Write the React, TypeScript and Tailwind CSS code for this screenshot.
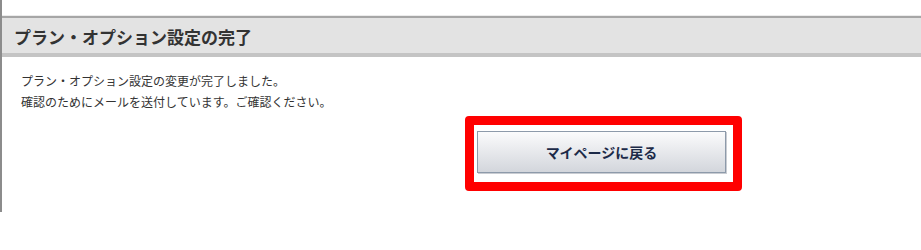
export default function App() {
  return (
    <div
      className="h-[250px] w-[921px] overflow-hidden bg-white"
      style={{ fontFamily: '"Noto Sans CJK JP", "Noto Sans", sans-serif' }}
    >
      <div className="h-[212px] border-l-2 border-[#8c8c8c] pt-[15px]">
        {/* Section header */}
        <div className="border-t border-[#ececec]">
          <div className="flex h-[41px] items-center border-t-2 border-[#a6a6a6] bg-[#e3e3e3] pl-[12px] shadow-[inset_0_-4px_0_#c4c4c4]">
            <h2 className="pb-[2px] text-[17px] font-bold leading-none text-[#333333]">
              プラン・オプション設定の完了
            </h2>
          </div>
        </div>

        {/* Message */}
        <div className="pl-[19px] pt-[13px] text-[12px] leading-[21px] text-[#333333]">
          <p>プラン・オプション設定の変更が完了しました。</p>
          <p>確認のためにメールを送付しています。ご確認ください。</p>
        </div>

        {/* Action */}
        <div className="ml-[475px] mt-[19px] flex">
          <div className="relative">
            <button className="h-[42px] w-[249px] border border-[#8d9aaa] bg-gradient-to-b from-[#fbfbfc] to-[#d3d6dc] text-[14px] font-bold text-[#1c2a48] shadow-[1px_1px_0_#c9ccd2]">
              マイページに戻る
            </button>
            <div className="pointer-events-none absolute -bottom-[18px] -left-[12px] -right-[16px] -top-[15px] rounded-[4px] border-[9px] border-[#ff0000]" />
          </div>
        </div>
      </div>
    </div>
  )
}
